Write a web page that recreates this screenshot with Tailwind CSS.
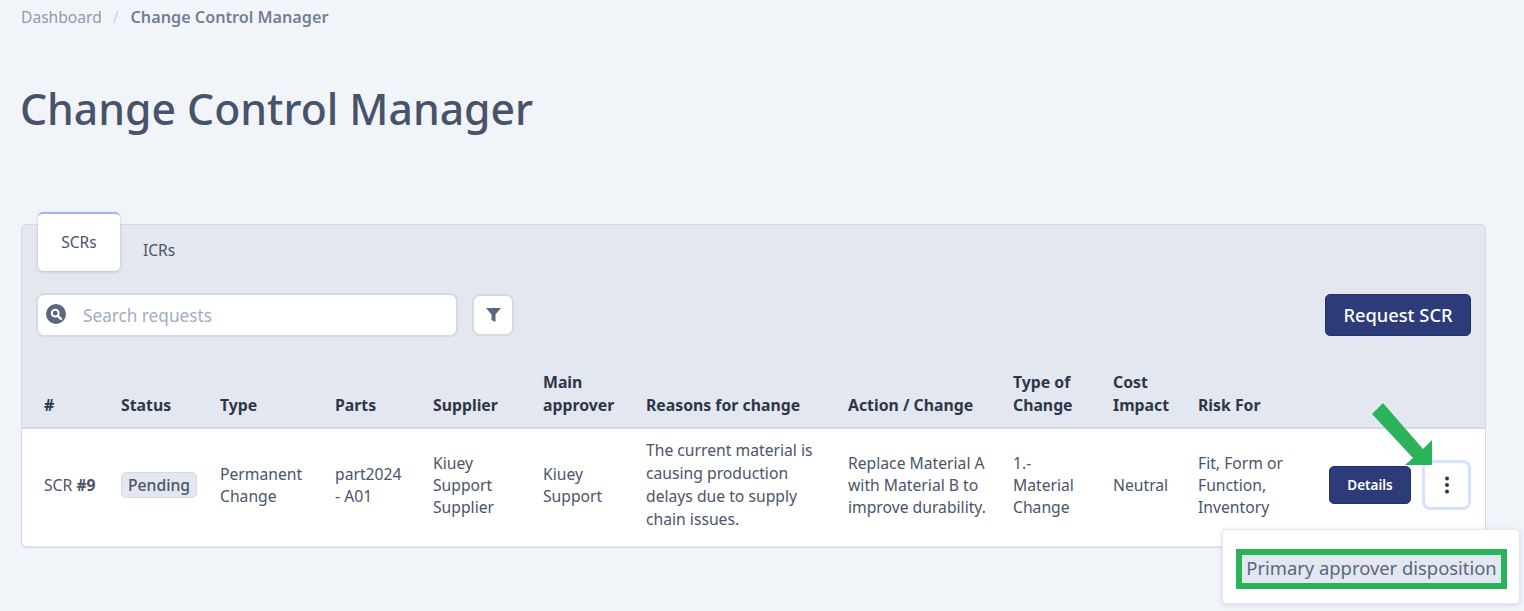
<!DOCTYPE html>
<html lang="en">
<head>
  <meta charset="UTF-8" />
  <title>Change Control Manager</title>
  <script src="https://cdn.jsdelivr.net/npm/@tailwindcss/browser@4"></script>
</head>
<body class="bg-[#f1f5fa] text-[#4a5568] font-['Noto_Sans',sans-serif] h-[611px] overflow-hidden">
  <div class="relative h-[611px] px-[21px] pt-[8px]">
    <nav class="flex items-center h-[18px] text-[15.6px] leading-[18px]">
      <span class="text-[#8f9bb0]">Dashboard</span>
      <span class="text-[#cbd5e0] mx-[11px]">/</span>
      <span class="ml-px font-semibold text-[#718096] text-[16.2px]">Change Control Manager</span>
    </nav>

    <h1 class="mt-[55px] -ml-px text-[42.7px] leading-[56px] font-medium text-[#46536a]">Change Control Manager</h1>

    <div class="mt-[87px] w-[1465px] h-[324px] bg-[#e2e7f0] border border-[#d3dae6] rounded-[5px]">
      <div class="flex items-start pl-[16px] h-[68px]">
        <button class="w-[82px] h-[59px] -mt-[13px] bg-white border-t-2 border-[#a3b5f0] rounded-[5px] shadow-[0_1px_3px_rgba(100,116,139,0.35)] text-[15.5px] text-[#4a5568]">SCRs</button>
        <button class="ml-[23px] mt-[14px] text-[15.5px] leading-[22px] text-[#4a5568]">ICRs</button>
      </div>

      <div class="flex items-center pl-[14px] pr-[14px] h-[44px]">
        <div class="flex items-center w-[422px] h-[44px] bg-white border-2 border-[#d3dae6] rounded-[8px] pl-[8px]">
          <svg width="20" height="20" viewBox="0 0 20 20" class="shrink-0 -mt-[3px]">
            <circle cx="10" cy="10" r="10" fill="#5a6780" />
            <circle cx="9.2" cy="9.2" r="3.4" fill="none" stroke="#fff" stroke-width="2" />
            <path d="M11.8 11.8L15 15" stroke="#fff" stroke-width="2.4" stroke-linecap="round" />
          </svg>
          <span class="ml-[17px] pt-px text-[17.2px] text-[#a0aec0]">Search requests</span>
        </div>
        <button class="ml-[14px] w-[42px] h-[42px] bg-white border-2 border-[#d3dae6] rounded-[8px] flex items-center justify-center">
          <svg width="15" height="14" viewBox="0 0 15 14"><path d="M0 0H15L9.5 6.5V14L5.500 12V6.500Z" fill="#5a6780" /></svg>
        </button>
        <button class="ml-auto w-[146px] h-[42px] bg-[#2d3c78] border border-[#24306a] rounded-[5px] text-white text-[18.3px] font-medium">Request SCR</button>
      </div>

      <table class="table-fixed w-full mt-[23px] text-left text-[15.7px] leading-[22px]">
        <colgroup>
          <col class="w-[99px]" /><col class="w-[99px]" /><col class="w-[115px]" /><col class="w-[98px]" /><col class="w-[110px]" /><col class="w-[103px]" /><col class="w-[202px]" /><col class="w-[165px]" /><col class="w-[100px]" /><col class="w-[85px]" /><col class="w-[131px]" /><col />
        </colgroup>
        <thead class="text-[#2d3748] text-[15.8px] leading-[23px] font-bold">
          <tr class="h-[68px] align-bottom border-b-2 border-[#d3dae6]">
            <th class="pl-[22px] pb-[10px]">#</th>
            <th class="pb-[10px]">Status</th>
            <th class="pb-[10px]">Type</th>
            <th class="pb-[10px]">Parts</th>
            <th class="pb-[10px]">Supplier</th>
            <th class="pb-[10px]">Main<br />approver</th>
            <th class="pb-[10px]">Reasons for change</th>
            <th class="pb-[10px]">Action / Change</th>
            <th class="pb-[10px]">Type of<br />Change</th>
            <th class="pb-[10px]">Cost<br />Impact</th>
            <th class="pb-[10px]">Risk For</th>
            <th></th>
          </tr>
        </thead>
        <tbody class="bg-white">
          <tr class="h-[118px]">
            <td class="pl-[22px] pb-[6px] rounded-bl-[5px]">SCR <span class="font-bold">#9</span></td>
            <td class="pb-[6px]"><span class="inline-block w-[76px] h-[26px] bg-[#e2e7f0] border border-[#d3dae6] rounded-[5px] text-center leading-[24px] font-medium">Pending</span></td>
            <td class="pb-[6px]">Permanent<br />Change</td>
            <td class="pb-[6px]">part2024<br />- A01</td>
            <td class="pb-[6px]">Kiuey<br />Support<br />Supplier</td>
            <td class="pb-[6px]">Kiuey<br />Support</td>
            <td class="pb-[6px] leading-[23px]">The current material is<br />causing production<br />delays due to supply<br />chain issues.</td>
            <td class="pb-[6px]">Replace Material A<br />with Material B to<br />improve durability.</td>
            <td class="pb-[6px]">1.-<br />Material<br />Change</td>
            <td class="pb-[6px]">Neutral</td>
            <td class="pb-[6px]">Fit, Form or<br />Function,<br />Inventory</td>
            <td class="pb-[6px] rounded-br-[5px]">
              <div class="flex items-center">
                <button class="w-[82px] h-[38px] bg-[#2d3c78] border border-[#24306a] rounded-[5px] text-white text-[13.5px] font-semibold">Details</button>
                <button class="ml-[11px] w-[49px] h-[50px] bg-white border-[3px] border-[#d6e0ff] rounded-[8px] flex items-center justify-center">
                  <svg width="4" height="18" viewBox="0 0 4 18" fill="#2d3748"><circle cx="2" cy="2.500" r="2" /><circle cx="2" cy="9" r="2" /><circle cx="2" cy="15.500" r="2" /></svg>
                </button>
              </div>
            </td>
          </tr>
        </tbody>
      </table>
    </div>

    <!-- dropdown open under the kebab button -->
    <div class="absolute left-[1222px] top-[529px] w-[298px] h-[75px] bg-white rounded-[4px] border border-[#e2e7f0] shadow-[0_1px_4px_rgba(100,116,139,0.25)]">
      <div class="absolute left-[13px] top-[19px] w-[271px] h-[40px] pb-[2px] border-[6px] border-[#2bb35a] bg-[#e2e7f0] flex items-center justify-center text-[18.4px] text-[#5a6780] whitespace-nowrap">Primary approver disposition</div>
    </div>

    <!-- green annotation arrow -->
    <svg class="absolute left-[1370px] top-[402px]" width="64" height="66" viewBox="0 0 64 66">
      <path d="M13 1L2 12L43 56L35 63H62V38L53 47Z" fill="#2bb35a" />
    </svg>
  </div>
</body>
</html>
